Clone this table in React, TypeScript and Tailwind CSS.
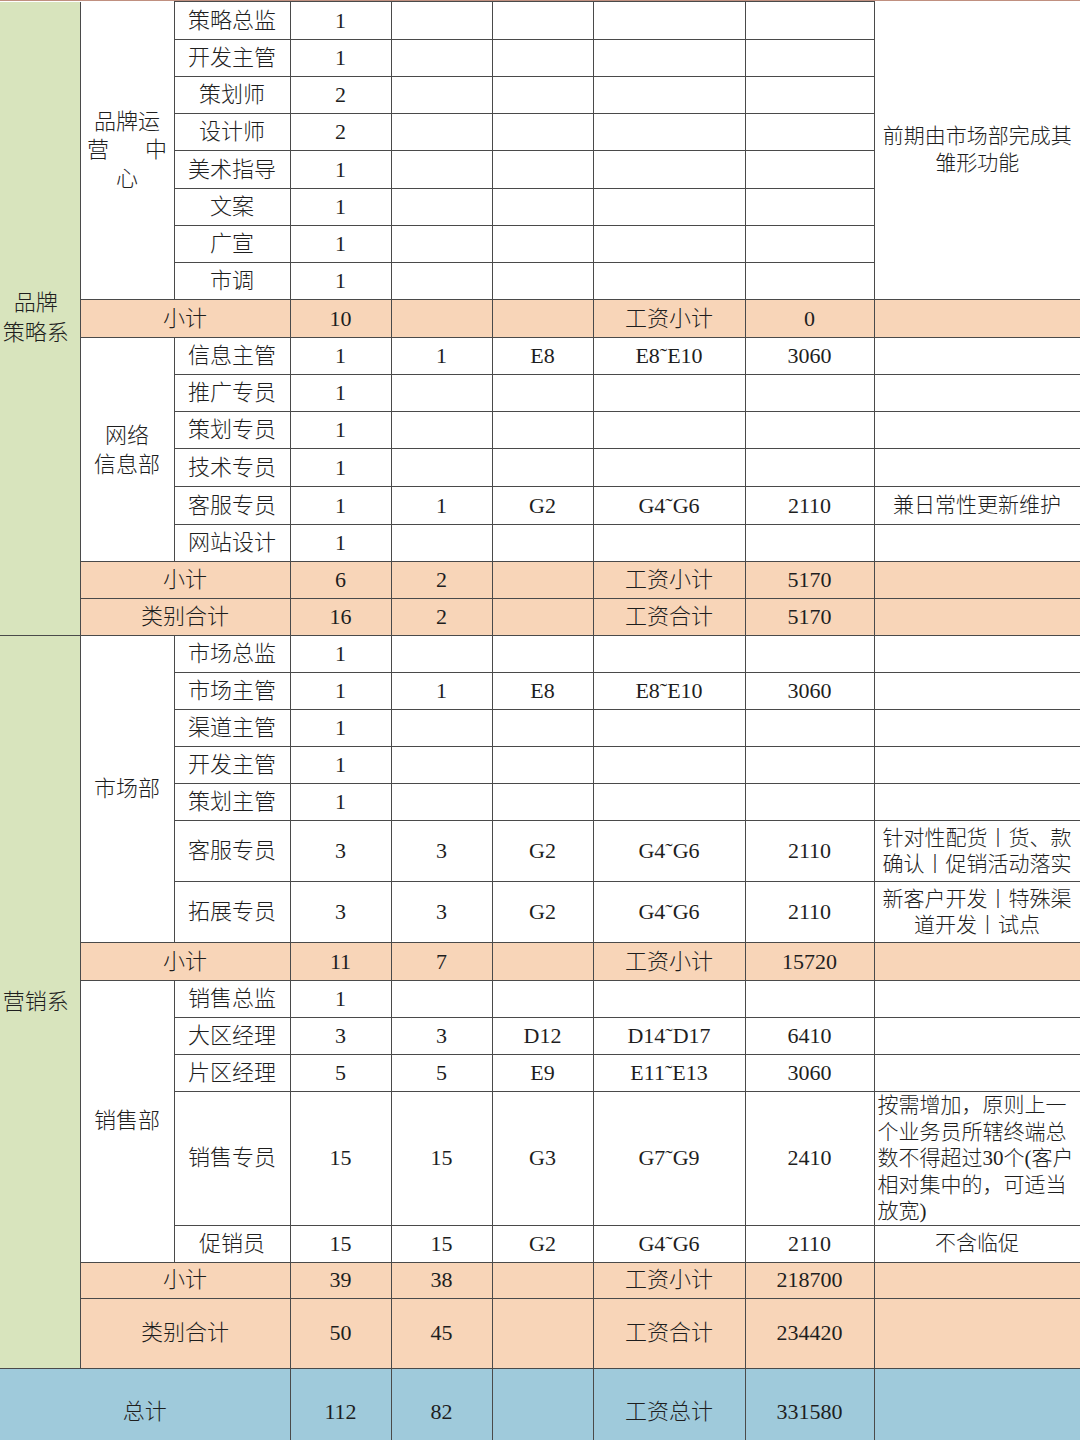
import React from 'react';

type Row = {
  title: string;
  n1?: string;
  n2?: string;
  grade?: string;
  range?: string;
  pay?: string;
  note?: React.ReactNode;
  h: number;
};

const cell = 'border border-[#4a4a4a] p-0 text-center align-middle';
const peach = 'bg-[#f8d5b8]';
const green = 'bg-[#d8e4bd]';
const blue = 'bg-[#9fcadb]';
const titleCell = 'border border-[#4a4a4a] border-l-[#9a9a9a] p-0 text-center align-middle';

const brandRows: Row[] = [
  { title: '策略总监', n1: '1', h: 38 },
  { title: '开发主管', n1: '1', h: 37 },
  { title: '策划师', n1: '2', h: 37 },
  { title: '设计师', n1: '2', h: 37 },
  { title: '美术指导', n1: '1', h: 38 },
  { title: '文案', n1: '1', h: 37 },
  { title: '广宣', n1: '1', h: 37 },
  { title: '市调', n1: '1', h: 37 },
];

const netRows: Row[] = [
  { title: '信息主管', n1: '1', n2: '1', grade: 'E8', range: 'E8˜E10', pay: '3060', h: 37 },
  { title: '推广专员', n1: '1', h: 37 },
  { title: '策划专员', n1: '1', h: 37 },
  { title: '技术专员', n1: '1', h: 38 },
  { title: '客服专员', n1: '1', n2: '1', grade: 'G2', range: 'G4˜G6', pay: '2110', note: '兼日常性更新维护', h: 38 },
  { title: '网站设计', n1: '1', h: 37 },
];

const marketRows: Row[] = [
  { title: '市场总监', n1: '1', h: 37 },
  { title: '市场主管', n1: '1', n2: '1', grade: 'E8', range: 'E8˜E10', pay: '3060', h: 37 },
  { title: '渠道主管', n1: '1', h: 37 },
  { title: '开发主管', n1: '1', h: 37 },
  { title: '策划主管', n1: '1', h: 37 },
  {
    title: '客服专员', n1: '3', n2: '3', grade: 'G2', range: 'G4˜G6', pay: '2110', h: 61,
    note: (<span className="block leading-[26px] text-[21px]">针对性配货丨货、款<br />确认丨促销活动落实</span>),
  },
  {
    title: '拓展专员', n1: '3', n2: '3', grade: 'G2', range: 'G4˜G6', pay: '2110', h: 61,
    note: (<span className="block leading-[26px] text-[21px]">新客户开发丨特殊渠<br />道开发丨试点</span>),
  },
];

const salesRows: Row[] = [
  { title: '销售总监', n1: '1', h: 37 },
  { title: '大区经理', n1: '3', n2: '3', grade: 'D12', range: 'D14˜D17', pay: '6410', h: 37 },
  { title: '片区经理', n1: '5', n2: '5', grade: 'E9', range: 'E11˜E13', pay: '3060', h: 37 },
  {
    title: '销售专员', n1: '15', n2: '15', grade: 'G3', range: 'G7˜G9', pay: '2410', h: 133,
    note: (
      <span className="block pl-[3px] text-left leading-[26.5px] text-[21px]">
        按需增加，原则上一<br />个业务员所辖终端总<br />数不得超过30个(客户<br />相对集中的，可适当<br />放宽)
      </span>
    ),
  },
  { title: '促销员', n1: '15', n2: '15', grade: 'G2', range: 'G4˜G6', pay: '2110', note: '不含临促', h: 37 },
];

function DataCells({ r, withNote = true }: { r: Row; withNote?: boolean }) {
  return (
    <>
      <td className={titleCell}>{r.title}</td>
      <td className={cell}>{r.n1}</td>
      <td className={cell}>{r.n2}</td>
      <td className={cell}>{r.grade}</td>
      <td className={cell}>{r.range}</td>
      <td className={`${cell} border-l-[#8a8a8a]`}>{r.pay}</td>
      {withNote && <td className={`${cell} text-[21px]`}>{r.note}</td>}
    </>
  );
}

function SumRow({ label, n1, n2, payLabel, pay, h }: { label: string; n1: string; n2?: string; payLabel: string; pay: string; h: number }) {
  return (
    <>
      <td colSpan={2} className={`${cell} ${peach}`}>{label}</td>
      <td className={`${cell} ${peach}`}>{n1}</td>
      <td className={`${cell} ${peach}`}>{n2}</td>
      <td className={`${cell} ${peach}`}></td>
      <td className={`${cell} ${peach}`}>{payLabel}</td>
      <td className={`${cell} ${peach} border-l-[#8a8a8a]`}>{pay}</td>
      <td className={`${cell} ${peach}`} style={{ height: h }}></td>
    </>
  );
}

export default function App() {
  return (
    <div
      className="w-[1080px] h-[1440px] overflow-hidden bg-white text-[22px] text-[#1e1e1e] border-t border-[#c09080]"
      style={{ fontFamily: '"Liberation Serif", "Noto Sans CJK SC", serif' }}
    >
      <table className="w-[1080px] table-fixed border-collapse leading-none font-light">
        <colgroup>
          <col className="w-[80px]" />
          <col className="w-[94px]" />
          <col className="w-[116px]" />
          <col className="w-[101px]" />
          <col className="w-[101px]" />
          <col className="w-[101px]" />
          <col className="w-[152px]" />
          <col className="w-[129px]" />
          <col className="w-[206px]" />
        </colgroup>
        <tbody>
          {brandRows.map((r, i) => (
            <tr key={'b' + i} style={{ height: r.h }}>
              {i === 0 && (
                <td rowSpan={17} className={`${cell} ${green} border-l-0 border-t-0 pr-[8px] leading-[30px]`}>
                  品牌<br />策略系
                </td>
              )}
              {i === 0 && (
                <td rowSpan={8} className={`${cell} border-t-0 leading-[28.5px]`}>
                  <div className="mx-auto w-[80px]">
                    <div>品牌运</div>
                    <div className="flex justify-between"><span>营</span><span>中</span></div>
                    <div>心</div>
                  </div>
                </td>
              )}
              <DataCells r={r} withNote={false} />
              {i === 0 && (
                <td rowSpan={8} className={`${cell} border-t-0 border-r-0 text-[21px] leading-[27px]`}>
                  前期由市场部完成其<br />雏形功能
                </td>
              )}
            </tr>
          ))}
          <tr style={{ height: 38 }}>
            <SumRow label="小计" n1="10" payLabel="工资小计" pay="0" h={38} />
          </tr>
          {netRows.map((r, i) => (
            <tr key={'n' + i} style={{ height: r.h }}>
              {i === 0 && (
                <td rowSpan={6} className={`${cell} leading-[29px]`}>
                  网络<br />信息部
                </td>
              )}
              <DataCells r={r} />
            </tr>
          ))}
          <tr style={{ height: 37 }}>
            <SumRow label="小计" n1="6" n2="2" payLabel="工资小计" pay="5170" h={37} />
          </tr>
          <tr style={{ height: 37 }}>
            <SumRow label="类别合计" n1="16" n2="2" payLabel="工资合计" pay="5170" h={37} />
          </tr>
          {marketRows.map((r, i) => (
            <tr key={'m' + i} style={{ height: r.h }}>
              {i === 0 && (
                <td rowSpan={15} className={`${cell} ${green} border-l-0 pr-[8px]`}>
                  营销系
                </td>
              )}
              {i === 0 && (
                <td rowSpan={7} className={cell}>
                  市场部
                </td>
              )}
              <DataCells r={r} />
            </tr>
          ))}
          <tr style={{ height: 38 }}>
            <SumRow label="小计" n1="11" n2="7" payLabel="工资小计" pay="15720" h={38} />
          </tr>
          {salesRows.map((r, i) => (
            <tr key={'s' + i} style={{ height: r.h }}>
              {i === 0 && (
                <td rowSpan={5} className={cell}>
                  销售部
                </td>
              )}
              <DataCells r={r} />
            </tr>
          ))}
          <tr style={{ height: 36 }}>
            <SumRow label="小计" n1="39" n2="38" payLabel="工资小计" pay="218700" h={36} />
          </tr>
          <tr style={{ height: 70 }}>
            <SumRow label="类别合计" n1="50" n2="45" payLabel="工资合计" pay="234420" h={70} />
          </tr>
          <tr style={{ height: 84 }}>
            <td colSpan={3} className={`${cell} ${blue} border-l-0 pt-[4px]`}>总计</td>
            <td className={`${cell} ${blue} pt-[4px]`}>112</td>
            <td className={`${cell} ${blue} pt-[4px]`}>82</td>
            <td className={`${cell} ${blue}`}></td>
            <td className={`${cell} ${blue} pt-[4px]`}>工资总计</td>
            <td className={`${cell} ${blue} border-l-[#8a8a8a] pt-[4px]`}>331580</td>
            <td className={`${cell} ${blue} border-r-0`}></td>
          </tr>
        </tbody>
      </table>
    </div>
  );
}
